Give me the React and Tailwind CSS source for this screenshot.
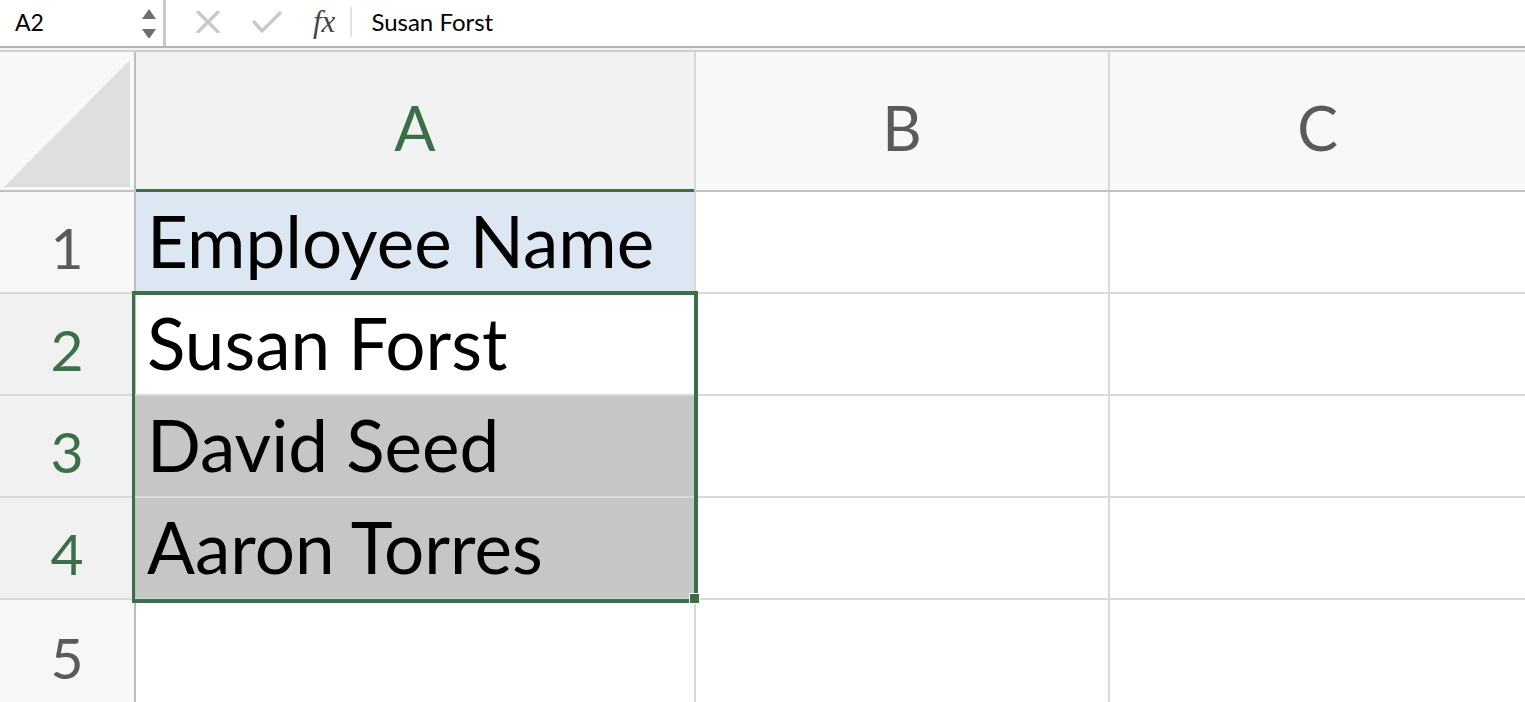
import React from "react";

function RowHeader({ n, active }) {
  return (
    <div
      className={`w-[136px] shrink-0 border-r-2 border-r-[#bdbdbd] flex items-end justify-center pb-[16px] text-[57px] leading-none ${
        active ? "bg-[#f1f1f1] text-[#3b6f48]" : "bg-[#f7f7f7] text-[#5a5a5a]"
      }`}
    >
      {n}
    </div>
  );
}

function Row({ n, active, aClass = "bg-white", text, last }) {
  return (
    <div className={`flex h-[102px] ${last ? "" : "border-b-2 border-b-[#d9d9d9]"}`}>
      <RowHeader n={n} active={active} />
      <div className={`w-[560px] shrink-0 border-r-2 border-r-[#d9d9d9] flex items-end pl-[11px] pb-[16px] text-[71px] leading-none text-black ${aClass}`}>
        {text}
      </div>
      <div className="w-[414px] shrink-0 border-r-2 border-r-[#d9d9d9] bg-white" />
      <div className="flex-1 bg-white" />
    </div>
  );
}

export default function App() {
  return (
    <div className="relative w-[1525px] h-[702px] overflow-hidden bg-white font-['Lato',sans-serif]">
      {/* Formula bar */}
      <div className="flex h-[46px] items-stretch bg-white">
        <div className="w-[163px] shrink-0 flex items-center justify-between pl-[15px] pr-[7px] pb-[2px]">
          <span className="text-[23px] text-black leading-none">A2</span>
          <svg width="14" height="32" viewBox="0 0 14 32">
            <polygon points="7,3 14,13 0,13" fill="#6e6e6e" />
            <polygon points="0,23 14,23 7,33" fill="#6e6e6e" />
          </svg>
        </div>
        <div className="w-[3px] bg-[#c8c8c8]" />
        <div className="flex items-center pl-[30px] pb-[2px]">
          <svg width="24" height="22" viewBox="0 0 24 22" className="mr-[32px]">
            <path d="M2 1 L22 21 M22 1 L2 21" stroke="#c9c9c9" strokeWidth="3.4" strokeLinecap="round" />
          </svg>
          <svg width="30" height="22" viewBox="0 0 30 22" className="mr-[31px]">
            <path d="M2 11 L10 20 L28 2" stroke="#c9c9c9" strokeWidth="3.4" fill="none" strokeLinecap="round" strokeLinejoin="round" />
          </svg>
          <span className="font-['Liberation_Serif',serif] italic text-[31px] text-[#444] leading-none mr-[15px] pb-[2px]">
            fx
          </span>
          <div className="w-[2px] h-[30px] bg-[#e2e2e2] mr-[19px]" />
          <span className="text-[24px] text-black leading-none">Susan Forst</span>
        </div>
      </div>
      {/* double line */}
      <div className="h-[6px] border-t-2 border-t-[#b5b5b5] border-b-2 border-b-[#cfcfcf] bg-[#f2f2f2]" />
      {/* column header */}
      <div className="flex h-[140px] border-b-2 border-b-[#c2c2c2]">
        <div className="w-[136px] shrink-0 border-r-2 border-r-[#bdbdbd] bg-[#f8f8f8] flex items-end justify-end pr-[4px] pb-[3px]">
          <svg width="126" height="127" viewBox="0 0 126 127">
            <polygon points="126,0 126,127 0,127" fill="#dfdfdf" />
          </svg>
        </div>
        <div className="w-[560px] shrink-0 border-r-2 border-r-[#d9d9d9] bg-[#f2f2f2] flex items-center justify-center text-[61px] leading-none text-[#3b6f48] pt-[12px] relative">
          A
          <div className="absolute left-0 right-0 bottom-[-2px] h-[3px] bg-[#3b6f48]" />
        </div>
        <div className="w-[414px] shrink-0 border-r-2 border-r-[#d9d9d9] bg-[#f8f8f8] flex items-center justify-center text-[61px] leading-none text-[#5a5a5a] pt-[12px]">
          B
        </div>
        <div className="flex-1 bg-[#f8f8f8] flex items-center justify-center text-[61px] leading-none text-[#5a5a5a] pt-[12px]">
          C
        </div>
      </div>
      <Row n="1" aClass="bg-[#dde7f3]" text="Employee Name" />
      <Row n="2" active text="Susan Forst" />
      <Row n="3" active aClass="bg-[#c6c6c6]" text="David Seed" />
      <Row n="4" active aClass="bg-[#c6c6c6]" text="Aaron Torres" />
      <Row n="5" last />
      {/* selection overlay */}
      <div className="absolute left-[132px] top-[291px] w-[566px] h-[312px] border-[#3b6f48] border-l-[3px] border-t-[4px] border-r-[4px] border-b-[4px] pointer-events-none" />
      <div className="absolute left-[689px] top-[593px] w-[11px] h-[11px] bg-[#3b6f48] border border-white" />
    </div>
  );
}
